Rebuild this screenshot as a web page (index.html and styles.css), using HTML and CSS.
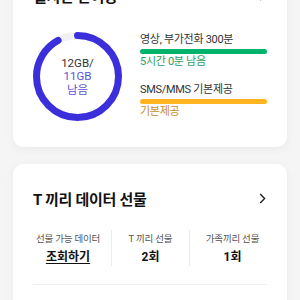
FILE: index.html
```html
<!DOCTYPE html>
<html lang="ko">
<head>
  <meta charset="UTF-8">
  <meta name="viewport" content="width=device-width, initial-scale=1.0">
  <title>잔여량</title>
  <link rel="stylesheet" href="styles.css">
</head>
<body>
  <div class="page">
    <section class="card card-usage">
      <div class="card-head">
        <h2>실시간 잔여량</h2>
        <svg class="chev" width="7" height="11" viewBox="0 0 7 11"><path d="M1.2 1 L5.6 5.5 L1.2 10" fill="none" stroke="#222" stroke-width="1.4"/></svg>
      </div>

      <div class="usage">
        <div class="donut">
          <svg width="89" height="89" viewBox="0 0 89 89">
            <circle cx="44.5" cy="44.5" r="41" fill="none" stroke="#f1f1f3" stroke-width="7"/>
            <circle cx="44.5" cy="44.5" r="41" fill="none" stroke="#3b2fdb" stroke-width="7"
                    stroke-linecap="round" stroke-dasharray="237 300" transform="rotate(-90 44.5 44.5)"/>
          </svg>
          <div class="donut-text">
            <span class="total">12GB/</span>
            <span class="left">11GB</span>
            <span class="left">남음</span>
          </div>
        </div>

        <div class="plans">
          <div class="plan">
            <p class="plan-name">영상, 부가전화 300분</p>
            <div class="bar bar-green"></div>
            <p class="plan-left green">5시간 0분 남음</p>
          </div>
          <div class="plan">
            <p class="plan-name">SMS/MMS 기본제공</p>
            <div class="bar bar-orange"></div>
            <p class="plan-left orange">기본제공</p>
          </div>
        </div>
      </div>
    </section>

    <section class="card card-gift">
      <div class="card-head">
        <h2>T 끼리 데이터 선물</h2>
        <svg class="chev" width="7" height="11" viewBox="0 0 7 11"><path d="M1.2 1 L5.6 5.5 L1.2 10" fill="none" stroke="#222" stroke-width="1.4"/></svg>
      </div>

      <div class="stats">
        <div class="stat stat-first">
          <span class="stat-label">선물 가능 데이터</span>
          <a class="stat-value link">조회하기</a>
        </div>
        <div class="stat">
          <span class="stat-label">T 끼리 선물</span>
          <span class="stat-value">2회</span>
        </div>
        <div class="stat stat-last">
          <span class="stat-label">가족끼리 선물</span>
          <span class="stat-value">1회</span>
        </div>
      </div>

      <hr class="line">
    </section>
  </div>
</body>
</html>
```

FILE: styles.css
```css
body {
  margin: 0;
  background-color: #f5f5f6;
  font-family: Roboto, "Noto Sans CJK KR", sans-serif;
  color: #222;
  overflow: hidden;
}

.page {
  padding: 0 13px;
}

.card {
  background-color: #ffffff;
  border-radius: 10px;
  padding: 22px 20px 26px;
  box-shadow: 0 2px 10px rgba(0, 0, 0, 0.05);
}

.card-usage {
  margin-top: -39px;
}

.card-gift {
  margin-top: 17px;
  padding-bottom: 40px;
}

.card-head {
  height: 24px;
  display: flex;
  align-items: center;
  justify-content: space-between;
}

.card-head h2 {
  margin: 0;
  font-size: 15px;
  font-weight: 700;
  color: #111;
  letter-spacing: -0.3px;
}

.chev {
  margin-right: 1px;
}

/* usage */
.usage {
  margin-top: 25px;
  display: flex;
  gap: 18px;
}

.donut {
  position: relative;
  width: 89px;
  height: 89px;
  flex: none;
}

.donut svg {
  display: block;
}

.donut-text {
  position: absolute;
  inset: 0;
  display: flex;
  flex-direction: column;
  align-items: center;
  justify-content: center;
  font-size: 11.5px;
  line-height: 13.5px;
  padding-top: 1px;
}

.donut-text .total {
  color: #333;
}

.donut-text .left {
  color: #5e50d6;
}

.plans {
  flex: 1;
  display: flex;
  flex-direction: column;
  gap: 12px;
}

.plan-name,
.plan-left {
  margin: 0;
  font-size: 11px;
  line-height: 16px;
  letter-spacing: -0.3px;
}

.plan-name {
  color: #333;
}

.bar {
  height: 5px;
  margin-top: 1px;
  border-radius: 3px;
}

.bar-green {
  background-color: #00b36c;
}

.bar-orange {
  background-color: #ffb420;
}

.green {
  color: #2f9c62;
}

.orange {
  color: #c48b2a;
}

/* gift */
.stats {
  margin-top: 20px;
  display: grid;
  grid-template-columns: 1fr 1fr 1fr;
}

.stat {
  display: flex;
  flex-direction: column;
  align-items: center;
  padding: 0;
}

.stat + .stat {
  border-left: 1px solid #ececec;
}

.stat-first {
  padding-right: 8px;
}

.stat-last {
  padding-left: 8px;
}

.stat-label {
  font-size: 9.5px;
  line-height: 18px;
  color: #555;
  letter-spacing: -0.2px;
}

.stat-value {
  font-size: 12px;
  line-height: 18px;
  font-weight: 700;
  color: #111;
}

.link {
  text-decoration: underline;
  text-underline-offset: 2px;
}

.line {
  margin: 18px 0 0;
  border: none;
  border-top: 1px solid #f0f0f0;
}
```
